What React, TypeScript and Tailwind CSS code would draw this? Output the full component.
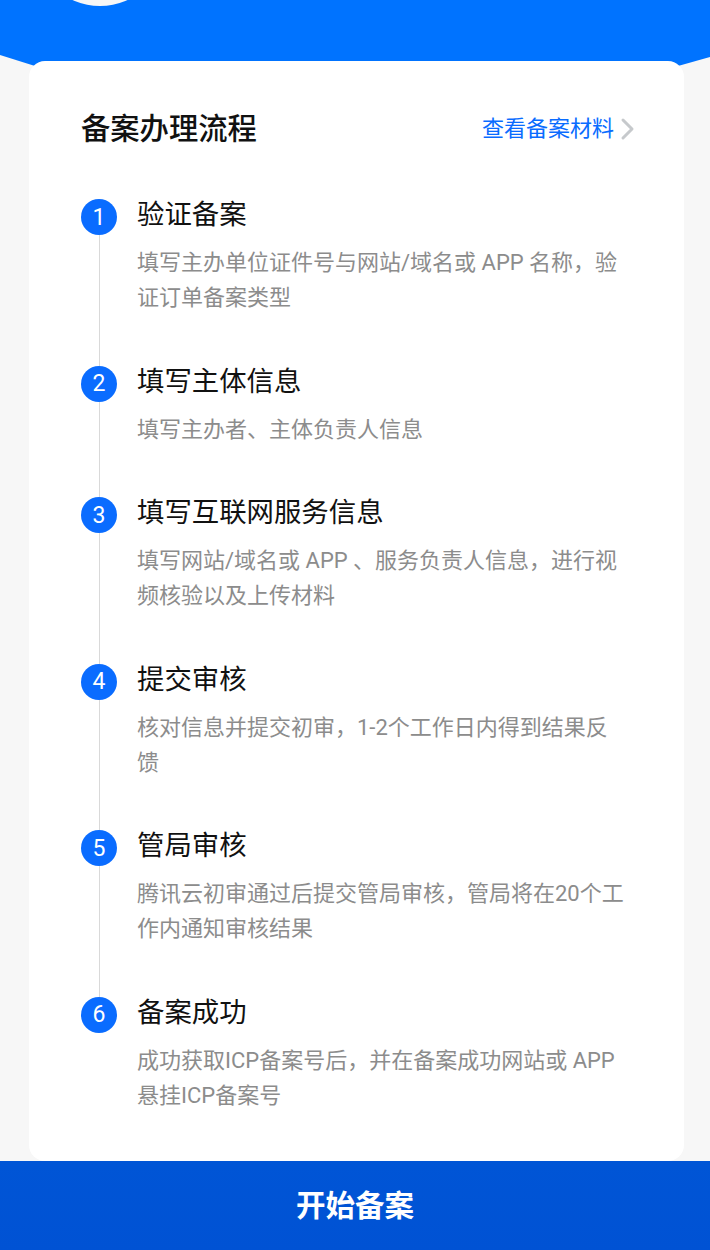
const steps = [
  {
    title: "验证备案",
    desc: ["填写主办单位证件号与网站/域名或 APP 名称，验", "证订单备案类型"],
  },
  { title: "填写主体信息", desc: ["填写主办者、主体负责人信息"] },
  {
    title: "填写互联网服务信息",
    desc: ["填写网站/域名或 APP 、服务负责人信息，进行视", "频核验以及上传材料"],
  },
  {
    title: "提交审核",
    desc: ["核对信息并提交初审，1-2个工作日内得到结果反", "馈"],
  },
  {
    title: "管局审核",
    desc: ["腾讯云初审通过后提交管局审核，管局将在20个工", "作内通知审核结果"],
  },
  {
    title: "备案成功",
    desc: ["成功获取ICP备案号后，并在备案成功网站或 APP", "悬挂ICP备案号"],
  },
];

function Chevron() {
  return (
    <svg width="16" height="24" viewBox="0 0 16 24" fill="none" className="ml-[6px]">
      <path d="M3 3 L12 12 L3 21" stroke="#c6c9cc" strokeWidth="3" strokeLinecap="round" strokeLinejoin="round" />
    </svg>
  );
}

export default function App() {
  return (
    <div className="relative flex min-h-[1250px] w-[710px] flex-col overflow-hidden bg-[#f7f7f7] font-['Roboto','Noto_Sans_CJK_SC',sans-serif]">
      {/* blue header */}
      <div className="relative h-[66px] bg-[#0073ff] [clip-path:polygon(0_0,100%_0,100%_57px,678px_66px,35px_66px,0_55px)]">
        <div className="absolute left-[34px] top-[-126px] h-[132px] w-[132px] rounded-full bg-[#f7f7f7]" />
      </div>

      {/* card */}
      <div className="relative z-10 ml-[29px] mt-[-5px] w-[655px] rounded-[16px] bg-white pl-[52px] pr-[48px] pt-[48px]">
        <div className="flex h-[40px] items-center justify-between">
          <h1 className="text-[29.3px] font-medium leading-[40px] text-[#111]">备案办理流程</h1>
          <div className="flex items-center">
            <span className="text-[22px] leading-[30px] text-[#0a6cff]">查看备案材料</span>
            <Chevron />
          </div>
        </div>

        <div className="mt-[48px] flex flex-col">
          {steps.map((step, i) => (
            <div key={step.title} className="flex">
              <div className="flex w-[36px] flex-col items-center">
                <div className={`h-[2px] w-px ${i > 0 ? "bg-[#d9d9d9]" : ""}`} />
                <div className="flex h-[36px] w-[36px] items-center justify-center rounded-full bg-[#0a6cff] text-[23px] leading-none text-white">
                  {i + 1}
                </div>
                {i < steps.length - 1 ? <div className="w-px flex-1 bg-[#d9d9d9]" /> : null}
              </div>
              <div className="ml-[20px] flex-1 pb-[48.5px]">
                <div className="text-[27.4px] leading-[36px] text-[#111]">{step.title}</div>
                <div className="mt-[12px] text-[22px] leading-[35px] text-[#8c8c8c]">
                  {step.desc.map((line) => (
                    <div key={line} className="whitespace-nowrap">
                      {line}
                    </div>
                  ))}
                </div>
              </div>
            </div>
          ))}
        </div>
      </div>

      {/* bottom button */}
      <button className="flex h-[90px] w-full items-center justify-center bg-gradient-to-b from-[#0055d6] to-[#0052d4] text-[29.5px] font-bold text-white">
        开始备案
      </button>
    </div>
  );
}
